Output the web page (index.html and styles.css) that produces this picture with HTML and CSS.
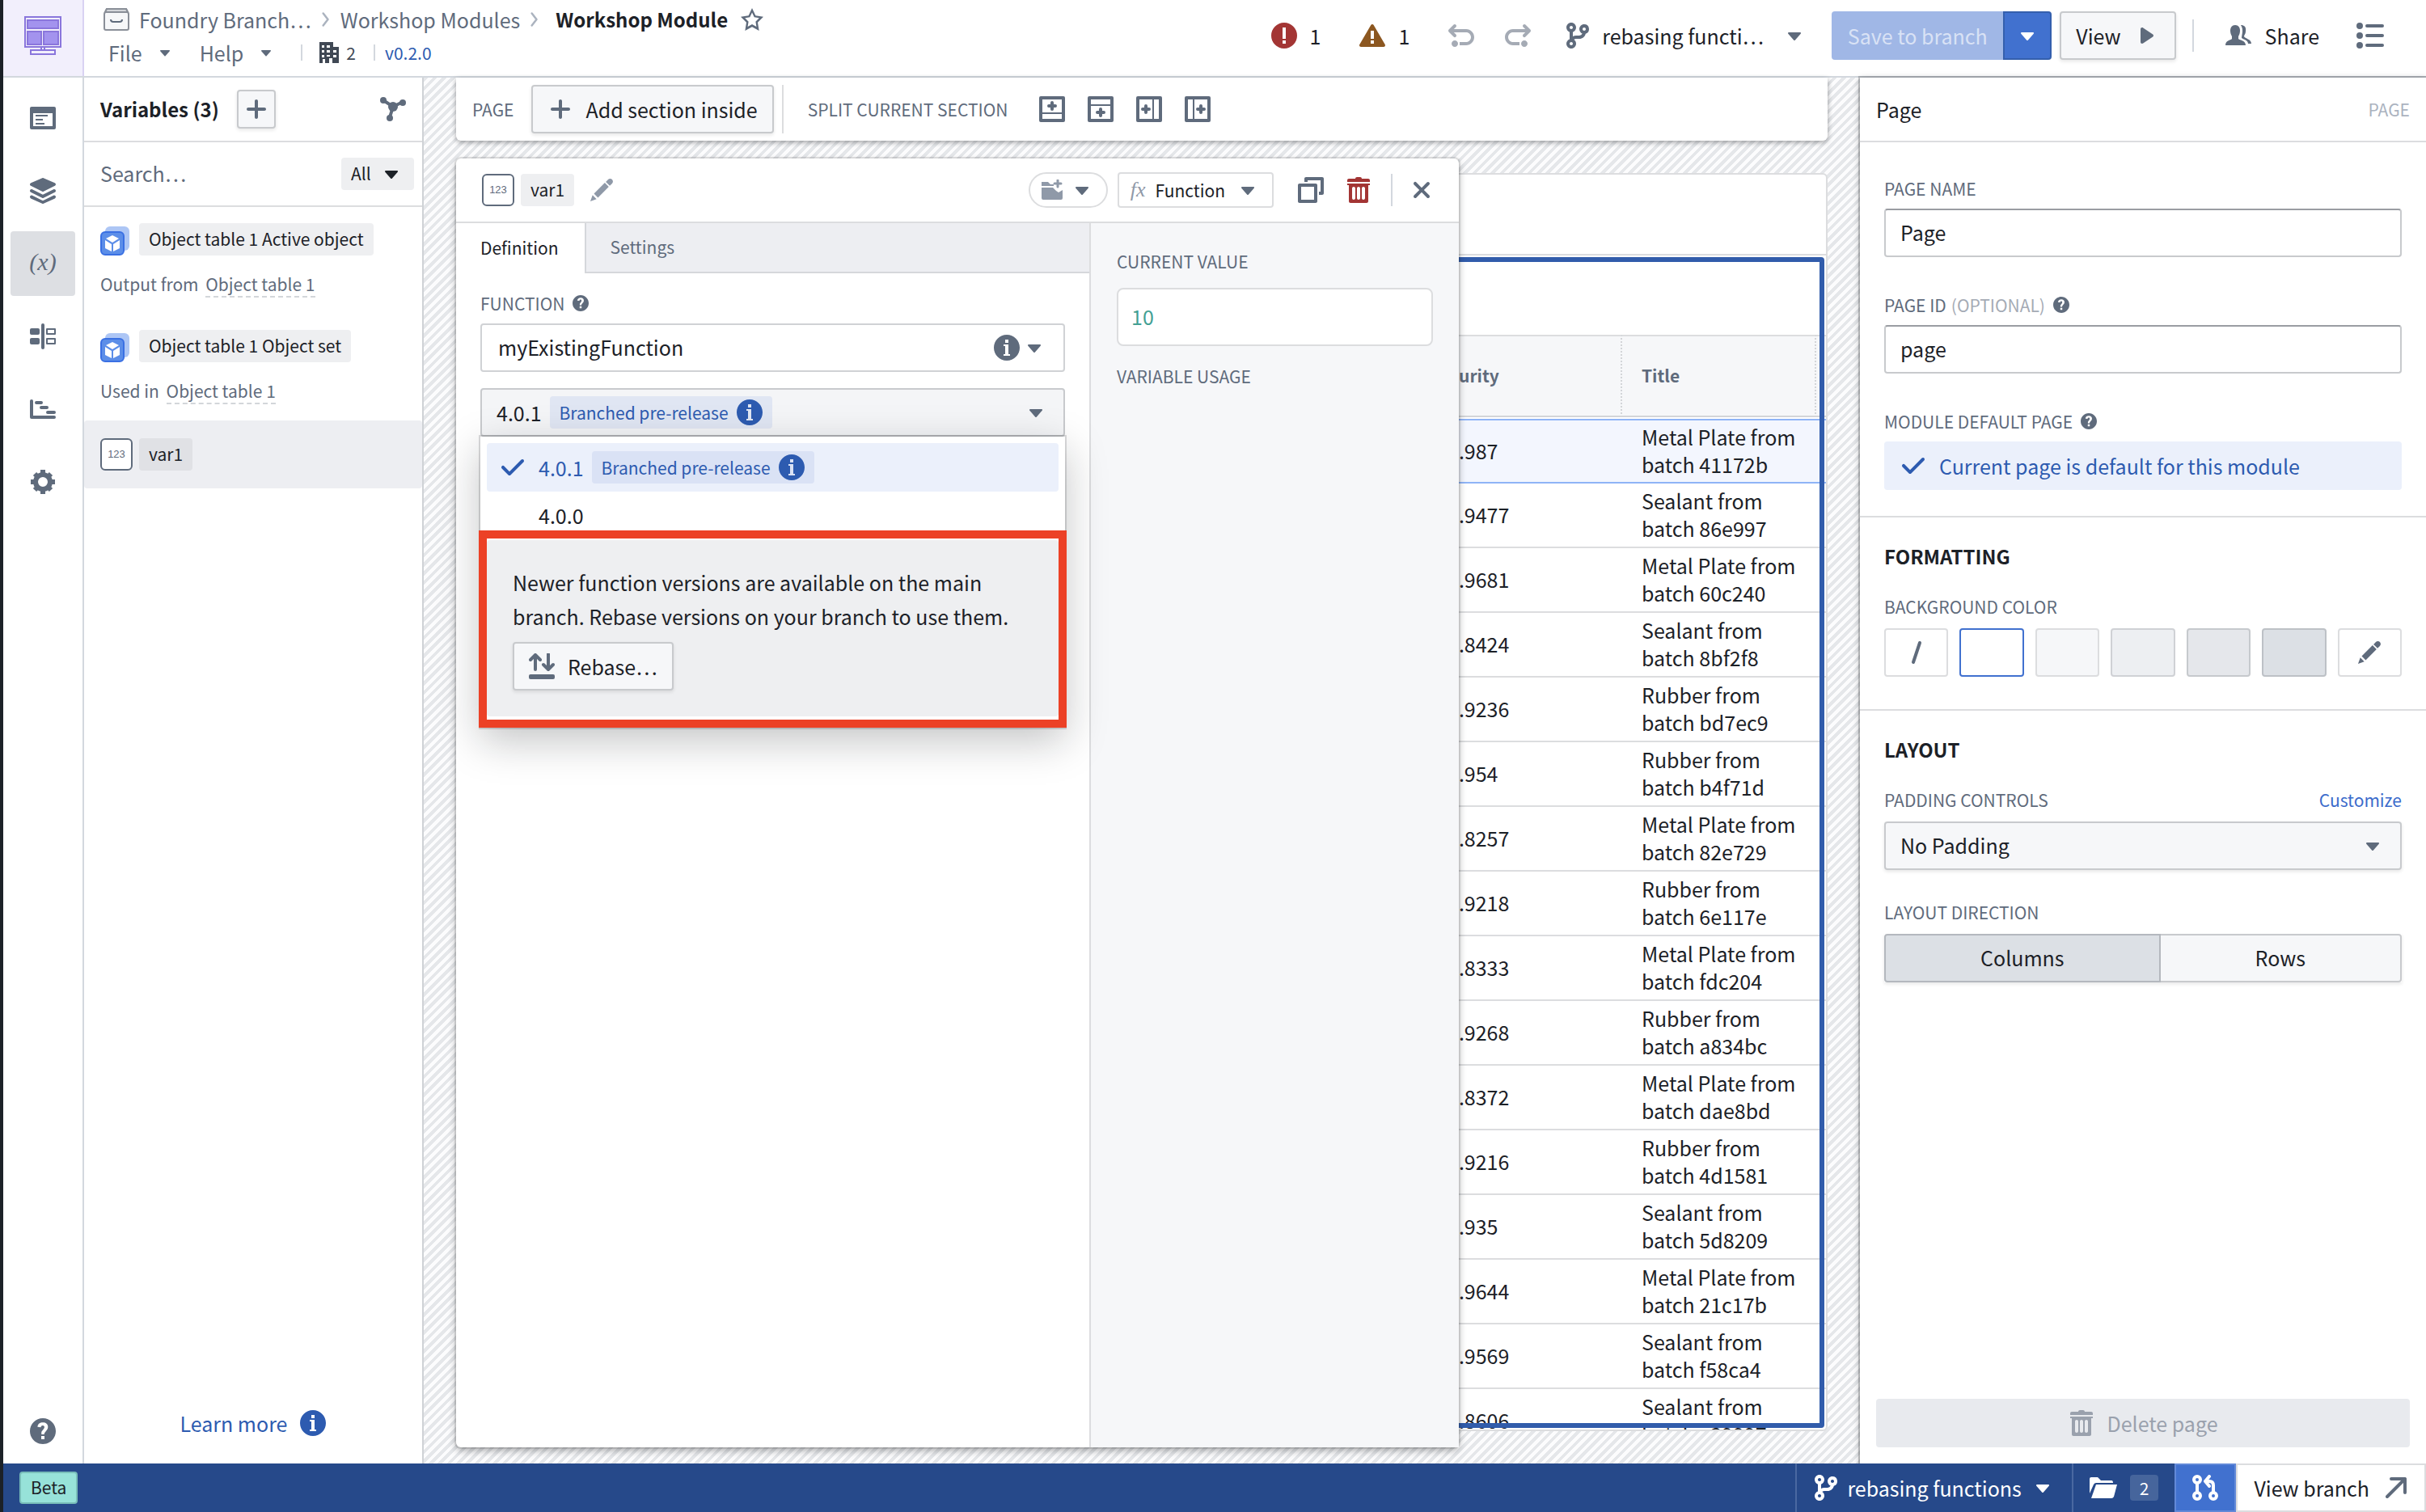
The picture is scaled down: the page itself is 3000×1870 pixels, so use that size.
FILE: index.html
```html
<!DOCTYPE html>
<html lang="en">
<head>
    <meta charset="UTF-8">
    <meta name="viewport" content="width=device-width, initial-scale=1.0">
    <title>Workshop Module</title>
    <link rel="stylesheet" href="styles.css">
</head>
<body>

<!-- Shared icons -->
<svg class="sprite" aria-hidden="true">
    <symbol id="caret" viewBox="0 0 16 16"><path d="M12 6.5c0-.28-.22-.5-.5-.5h-7a.495.495 0 00-.37.83l3.5 4c.09.1.22.17.37.17s.28-.07.37-.17l3.5-4c.08-.09.13-.2.13-.33z"/></symbol>
    <symbol id="plus" viewBox="0 0 16 16"><path d="M13 7H9V3c0-.55-.45-1-1-1s-1 .45-1 1v4H3c-.55 0-1 .45-1 1s.45 1 1 1h4v4c0 .55.45 1 1 1s1-.45 1-1V9h4c.55 0 1-.45 1-1s-.45-1-1-1z"/></symbol>
    <symbol id="tick" viewBox="0 0 16 16"><path d="M14 3c-.28 0-.53.11-.71.29L6 10.59l-3.29-3.3a1.003 1.003 0 00-1.42 1.42l4 4c.18.18.43.29.71.29s.53-.11.71-.29l8-8A1.003 1.003 0 0014 3z"/></symbol>
    <symbol id="chevron" viewBox="0 0 12 24"><path d="M2 3l7 9-7 9" fill="none" stroke="currentColor" stroke-width="3" stroke-linecap="round" stroke-linejoin="round"/></symbol>
    <symbol id="info" viewBox="0 0 16 16"><path d="M8 0C3.58 0 0 3.58 0 8s3.58 8 8 8 8-3.58 8-8-3.58-8-8-8zM7 3h2v2H7V3zm3 10H6v-1h1V7H6V6h3v6h1v1z"/></symbol>
    <symbol id="help" viewBox="0 0 16 16"><path d="M8 0C3.58 0 0 3.58 0 8s3.58 8 8 8 8-3.58 8-8-3.58-8-8-8zm1 13H7v-2h2v2zm1.93-6.48c-.14.32-.35.64-.62.97L9.25 8.83c-.12.15-.24.29-.28.42-.04.13-.09.3-.09.52V10H7.12V8.88s.05-.51.21-.71L8.4 6.73c.22-.26.35-.49.44-.68.09-.19.12-.38.12-.58 0-.3-.1-.55-.28-.75-.18-.19-.44-.28-.76-.28-.33 0-.59.1-.78.29-.19.19-.33.46-.4.81-.03.11-.1.15-.2.14l-1.7-.25c-.12-.01-.16-.08-.14-.19.12-.82.46-1.47 1.03-1.94.57-.48 1.32-.72 2.25-.72.47 0 .9.07 1.29.22s.72.34 1 .59c.28.25.49.55.65.89.15.35.22.72.22 1.12s-.07.75-.21 1.08z"/></symbol>
    <symbol id="branch" viewBox="0 0 16 16"><path d="M12 1c-1.66 0-3 1.34-3 3 0 1.25.76 2.32 1.85 2.77A2.02 2.02 0 019 8H7c-.73 0-1.41.21-2 .55V5.82C6.16 5.4 7 4.3 7 3c0-1.66-1.34-3-3-3S1 1.34 1 3c0 1.3.84 2.4 2 2.82v4.37c-1.16.4-2 1.51-2 2.81 0 1.66 1.34 3 3 3s3-1.34 3-3c0-1.04-.53-1.95-1.32-2.49.35-.31.81-.51 1.32-.51h2c1.92 0 3.52-1.35 3.91-3.15A2.996 2.996 0 0012 1zM4 2c.55 0 1 .45 1 1s-.45 1-1 1-1-.45-1-1 .45-1 1-1zm0 12c-.55 0-1-.45-1-1s.45-1 1-1 1 .45 1 1-.45 1-1 1zm8-9c-.55 0-1-.45-1-1s.45-1 1-1 1 .45 1 1-.45 1-1 1z"/></symbol>
    <symbol id="undo" viewBox="0 0 16 16"><path d="M4 11c-1.1 0-2 .9-2 2s.9 2 2 2 2-.9 2-2-.9-2-2-2zm7-7H3.41L4.7 2.71c.19-.18.3-.43.3-.71a1.003 1.003 0 00-1.71-.71l-3 3C.11 4.47 0 4.72 0 5c0 .28.11.53.29.71l3 3a1.003 1.003 0 001.42-1.42L3.41 6H11c1.66 0 3 1.34 3 3s-1.34 3-3 3H7v2h4c2.76 0 5-2.24 5-5s-2.24-5-5-5z"/></symbol>
    <symbol id="pencil" viewBox="0 0 16 16"><path d="M3.25 10.26l2.47 2.47 6.69-6.69-2.46-2.48-6.7 6.7zM.99 14.99l3.86-1.39-2.46-2.44L.99 14.99zm12.25-14c-.48 0-.92.2-1.24.51l-1.44 1.44 2.47 2.47 1.44-1.44c.32-.32.51-.75.51-1.24.01-.95-.77-1.74-1.74-1.74z"/></symbol>
    <symbol id="trash" viewBox="0 0 16 16"><path fill-rule="evenodd" d="M2 4.5h12V15c0 .55-.45 1-1 1H3c-.55 0-1-.45-1-1V4.500zM5 6c-.55 0-1 .45-1 1v6c0 .55.45 1 1 1s1-.45 1-1V7c0-.55-.45-1-1-1zm3 0c-.55 0-1 .45-1 1v6c0 .55.45 1 1 1s1-.45 1-1V7c0-.55-.45-1-1-1zm3 0c-.55 0-1 .45-1 1v6c0 .55.45 1 1 1s1-.45 1-1V7c0-.55-.45-1-1-1z"/><path d="M14 1h-4c0-.55-.45-1-1-1H7c-.55 0-1 .45-1 1H2c-.55 0-1 .45-1 1v1h14V2c0-.55-.45-1-1-1zM1 4h14v1H1z"/></symbol>
    <symbol id="objects" viewBox="0 0 36 36">
        <rect x="6" y="0" width="30" height="30" rx="6" fill="#adc6f5"/>
        <rect x="1" y="7" width="28" height="28" rx="5" fill="#5c8ee8" stroke="#3a70e3" stroke-width="2"/>
        <path d="M15 11l8 4-8 5-8-5z" fill="#fff"/>
        <path d="M6 17l8 5v9l-8-4zM24 17l-8 5v9l8-4z" fill="#fff"/>
    </symbol>
</svg>

<header class="topbar">
    <a class="logo" href="#" aria-label="Workshop">
        <svg width="48" height="48" viewBox="0 0 48 48">
            <path d="M2 1h44v37H2z" fill="#f2effc" stroke="#8a76dc" stroke-width="2"/>
            <path d="M5 5h38v10H5zM5 19h17v16H5zM25 19h18v16H25z" fill="#a393ee" stroke="#8a76dc" stroke-width="2"/>
            <path d="M9 42h30v5H9zM22 38v4M26 38v4" fill="#f2effc" stroke="#8a76dc" stroke-width="2"/>
        </svg>
    </a>
    <div class="title-block">
        <nav class="crumbs" aria-label="Breadcrumb">
            <svg width="32" height="28" viewBox="0 0 32 28"><path d="M4 1h24l3 6v18q0 2-2 2H3q-2 0-2-2V7z" fill="#f6f7f9" stroke="#8a8f98" stroke-width="2"/><path d="M4 1h24l2 4H2z" fill="#d3d6da" stroke="#8a8f98" stroke-width="2"/><path d="M9 14q0 3 3 3h8q3 0 3-3" fill="none" stroke="#5f6b7c" stroke-width="2"/></svg>
            <a href="#">Foundry Branch…</a>
            <svg class="faint" width="12" height="20"><use href="#chevron"/></svg>
            <a href="#">Workshop Modules</a>
            <svg class="faint" width="12" height="20"><use href="#chevron"/></svg>
            <h1>Workshop Module</h1>
            <button class="plain" aria-label="Favorite"><svg width="28" height="28" viewBox="0 0 16 16"><path d="M16 6.110l-5.530-.84L8 0 5.530 5.270 0 6.110l4 4.100L3.060 16 8 13.270 12.940 16 12 10.210l4-4.100zM4.910 13.200l.59-3.620L3 7.020l3.450-.53L8 3.200l1.550 3.290 3.450.53-2.500 2.560.59 3.620L8 11.490l-3.090 1.710z"/></svg></button>
        </nav>
        <div class="menus">
            <button class="plain menu-btn">File <svg width="24" height="24"><use href="#caret"/></svg></button>
            <button class="plain menu-btn">Help <svg width="24" height="24"><use href="#caret"/></svg></button>
            <span class="stat">
                <svg width="26" height="26" viewBox="0 0 26 26"><path fill-rule="evenodd" d="M1 0h17v6h7v20h-8v-6h-4v6H1zM4 4v3h3V4zm6 0v3h4V4zM4 10v3h3v-3zm6 0v3h4v-3zM4 16v3h3v-3zm6 0v2h4v-2zm8-6v3h4v-3zm0 6v3h4v-3zM5 21v5h3v-5z"/></svg>
                2
            </span>
            <a class="version" href="#">v0.2.0</a>
        </div>
    </div>

    <div class="actions">
        <span class="issue"><svg class="red" width="32" height="32" viewBox="0 0 16 16"><path d="M8 0a8 8 0 100 16A8 8 0 008 0zm1 13H7v-2h2v2zm0-3H7V3h2v7z"/></svg>1</span>
        <span class="issue"><svg class="brown" width="32" height="32" viewBox="0 0 16 16"><path d="M15.840 13.500l-7-12c-.17-.3-.48-.5-.85-.5s-.67.2-.85.5l-7 12c-.09.15-.15.31-.15.5 0 .55.45 1 1 1h14c.55 0 1-.45 1-1 0-.19-.06-.35-.15-.5zM9 13H7v-2h2v2zm0-3H7V5h2v5z"/></svg>1</span>
        <div class="history">
            <button class="plain" aria-label="Undo" disabled><svg width="32" height="32"><use href="#undo"/></svg></button>
            <button class="plain" aria-label="Redo" disabled><svg class="mirror" width="32" height="32"><use href="#undo"/></svg></button>
        </div>
        <button class="plain branch-btn">
            <svg width="32" height="32"><use href="#branch"/></svg>
            <span>rebasing functi…</span>
            <svg width="32" height="32"><use href="#caret"/></svg>
        </button>
        <div class="save-group">
            <button class="save" disabled>Save to branch</button>
            <button class="save-more" aria-label="More save options"><svg width="32" height="32"><use href="#caret"/></svg></button>
        </div>
        <button class="btn view-btn">View <svg width="32" height="32" viewBox="0 0 16 16"><path d="M12 8c0-.3-.1-.6-.4-.8l-6-4C5.500 3 5.200 3 5 3c-.6 0-1 .4-1 1v8c0 .6.4 1 1 1 .2 0 .5 0 .6-.2l6-4c.3-.2.4-.5.4-.8z"/></svg></button>
        <button class="plain share-btn">
            <svg width="34" height="32" viewBox="0 0 34 32"><path d="M13 3c4 0 6 3 6 7 0 3-1 5-2 7v3c2 2 9 2 9 8H1c0-6 6-6 8-8v-3c-1-2-2-4-2-7 0-4 2-7 6-7z"/><path d="M20 3c4 0 7 2 6 8 0 3-2 4-2 6 1 3 9 3 9 9h-4c0-4-5-5-8-7 0-4 3-10-1-16z"/></svg>
            Share
        </button>
        <button class="plain" aria-label="Outline"><svg width="34" height="32" viewBox="0 0 34 32"><path d="M0 4a4 4 0 018 0 4 4 0 01-8 0zm0 12a4 4 0 018 0 4 4 0 01-8 0zm0 12a4 4 0 018 0 4 4 0 01-8 0z"/><path d="M13 4h19M13 16h19M13 28h19" stroke="currentColor" stroke-width="4" stroke-linecap="round"/></svg></button>
    </div>
</header>

<div class="workspace">
    <nav class="rail" aria-label="Editor panels">
        <button aria-label="Overview"><svg width="32" height="32" viewBox="0 0 32 32"><path fill-rule="evenodd" d="M2 2h28q2 0 2 2v24q0 2-2 2H2q-2 0-2-2V4q0-2 2-2zm2 8v16h24V10z"/><path d="M7 13h15M7 18h9M7 23h11" stroke="currentColor" stroke-width="2"/></svg></button>
        <button aria-label="Layers"><svg width="32" height="32" viewBox="0 0 16 16"><path d="M.55 4.890l7 3.500c.14.070.29.110.45.110s.31-.04.45-.11l7-3.500a.998.998 0 00-.06-1.810L8.400.080a1.006 1.006 0 00-.79 0l-6.990 3a.992.992 0 00-.07 1.810zM15 10.800c-.16 0-.31.04-.45.11L8 14.180 1.450 10.900c-.14-.06-.29-.1-.45-.1-.55 0-1 .45-1 1 0 .39.23.73.55.89l7 3.200c.14.07.29.11.45.11s.31-.04.45-.11l7-3.200c.32-.16.55-.5.55-.89 0-.55-.45-1-1-1z"/><path d="M15 7c-.16 0-.31.04-.45.11L8 10.380 1.450 7.100C1.310 7.040 1.160 7 1 7c-.55 0-1 .45-1 1 0 .39.23.73.55.89l7 3.500c.14.07.29.11.45.11s.31-.04.45-.11l7-3.500c.32-.16.55-.5.55-.89 0-.55-.45-1-1-1z"/></svg></button>
        <button class="active" aria-label="Variables"><i>(x)</i></button>
        <button aria-label="Widgets"><svg width="32" height="32" viewBox="0 0 32 32"><rect x="14" y="0" width="4" height="32" rx="2"/><rect x="0" y="6" width="12" height="8" rx="2"/><rect x="0" y="18" width="12" height="8" rx="2"/><path d="M21 7h10v6H21zM21 19h10v6H21z" fill="none" stroke="currentColor" stroke-width="2" stroke-linejoin="round"/></svg></button>
        <button aria-label="Timeline"><svg width="32" height="32" viewBox="0 0 32 32"><path d="M2 6v20h28M8 8h6M14 14h7M22 20h8" fill="none" stroke="currentColor" stroke-width="4" stroke-linecap="round" stroke-linejoin="round"/></svg></button>
        <button aria-label="Settings"><svg width="32" height="32" viewBox="0 0 32 32"><circle cx="16" cy="16" r="9" fill="none" stroke="currentColor" stroke-width="6"/><path d="M16 1v6M16 25v6M1 16h6M25 16h6M6 6l4 4M22 22l4 4M26 6l-4 4M10 22l-4 4" stroke="currentColor" stroke-width="6"/></svg></button>
        <button class="rail-help" aria-label="Help"><svg width="32" height="32"><use href="#help"/></svg></button>
    </nav>

    <aside class="variables">
        <div class="panel-head">
            <h2>Variables (3)</h2>
            <button class="btn add-btn" aria-label="Add variable"><svg width="32" height="32"><use href="#plus"/></svg></button>
            <button class="plain graph-btn" aria-label="Dependency graph"><svg width="32" height="32" viewBox="0 0 32 32"><path d="M4 5l12 8L28 7M16 13l-4 13" fill="none" stroke="currentColor" stroke-width="4"/><circle cx="4" cy="5" r="4"/><circle cx="28" cy="8" r="4"/><circle cx="16" cy="13" r="6"/><circle cx="12" cy="27" r="4"/></svg></button>
        </div>
        <div class="search">
            <input type="text" placeholder="Search…" aria-label="Search variables">
            <div class="select-box small">
                <select aria-label="Variable type"><option>All</option></select>
                <svg width="32" height="32"><use href="#caret"/></svg>
            </div>
        </div>
        <ul class="var-list">
            <li>
                <div class="var-name"><svg width="36" height="36"><use href="#objects"/></svg><span class="tag">Object table 1 Active object</span></div>
                <p>Output from <a href="#">Object table 1</a></p>
            </li>
            <li>
                <div class="var-name"><svg width="36" height="36"><use href="#objects"/></svg><span class="tag">Object table 1 Object set</span></div>
                <p>Used in <a href="#">Object table 1</a></p>
            </li>
            <li class="selected">
                <div class="var-name"><span class="num-icon">123</span><span class="tag">var1</span></div>
            </li>
        </ul>
        <a class="learn" href="#">Learn more <svg width="32" height="32"><use href="#info"/></svg></a>
    </aside>

    <main class="canvas">
        <div class="section-bar">
            <span class="label">PAGE</span>
            <button class="btn section-btn"><svg width="32" height="32"><use href="#plus"/></svg> Add section inside</button>
            <span class="label split">SPLIT CURRENT SECTION</span>
            <button class="plain" aria-label="Add above"><svg width="32" height="32" viewBox="0 0 32 32"><path d="M2 2h28v28H2z" fill="none" stroke="currentColor" stroke-width="4" stroke-linejoin="round"/><path d="M4 21h24" stroke="currentColor" stroke-width="2"/><path d="M16 8v8M12 12h8" stroke="currentColor" stroke-width="4" stroke-linecap="round"/></svg></button>
            <button class="plain" aria-label="Add below"><svg width="32" height="32" viewBox="0 0 32 32"><path d="M2 2h28v28H2z" fill="none" stroke="currentColor" stroke-width="4" stroke-linejoin="round"/><path d="M4 11h24" stroke="currentColor" stroke-width="2"/><path d="M16 16v8M12 20h8" stroke="currentColor" stroke-width="4" stroke-linecap="round"/></svg></button>
            <button class="plain" aria-label="Add left"><svg width="32" height="32" viewBox="0 0 32 32"><path d="M2 2h28v28H2z" fill="none" stroke="currentColor" stroke-width="4" stroke-linejoin="round"/><path d="M21 4v24" stroke="currentColor" stroke-width="2"/><path d="M12 12v8M8 16h8" stroke="currentColor" stroke-width="4" stroke-linecap="round"/></svg></button>
            <button class="plain" aria-label="Add right"><svg width="32" height="32" viewBox="0 0 32 32"><path d="M2 2h28v28H2z" fill="none" stroke="currentColor" stroke-width="4" stroke-linejoin="round"/><path d="M11 4v24" stroke="currentColor" stroke-width="2"/><path d="M20 12v8M16 16h8" stroke="currentColor" stroke-width="4" stroke-linecap="round"/></svg></button>
        </div>

        <div class="page-card">
            <div class="page-header"></div>
            <div class="widget">
                <table>
                    <colgroup><col><col class="data-col"><col class="data-col"><col class="end-col"></colgroup>
                    <thead>
                        <tr><th></th><th>Purity</th><th>Title</th><th></th></tr>
                    </thead>
                    <tbody>
                        <tr class="picked"><td></td><td>0.987</td><td>Metal Plate from batch 41172b</td><td></td></tr>
                        <tr><td></td><td>0.9477</td><td>Sealant from batch 86e997</td><td></td></tr>
                        <tr><td></td><td>0.9681</td><td>Metal Plate from batch 60c240</td><td></td></tr>
                        <tr><td></td><td>0.8424</td><td>Sealant from batch 8bf2f8</td><td></td></tr>
                        <tr><td></td><td>0.9236</td><td>Rubber from batch bd7ec9</td><td></td></tr>
                        <tr><td></td><td>0.954</td><td>Rubber from batch b4f71d</td><td></td></tr>
                        <tr><td></td><td>0.8257</td><td>Metal Plate from batch 82e729</td><td></td></tr>
                        <tr><td></td><td>0.9218</td><td>Rubber from batch 6e117e</td><td></td></tr>
                        <tr><td></td><td>0.8333</td><td>Metal Plate from batch fdc204</td><td></td></tr>
                        <tr><td></td><td>0.9268</td><td>Rubber from batch a834bc</td><td></td></tr>
                        <tr><td></td><td>0.8372</td><td>Metal Plate from batch dae8bd</td><td></td></tr>
                        <tr><td></td><td>0.9216</td><td>Rubber from batch 4d1581</td><td></td></tr>
                        <tr><td></td><td>0.935</td><td>Sealant from batch 5d8209</td><td></td></tr>
                        <tr><td></td><td>0.9644</td><td>Metal Plate from batch 21c17b</td><td></td></tr>
                        <tr><td></td><td>0.9569</td><td>Sealant from batch f58ca4</td><td></td></tr>
                        <tr><td></td><td>0.8606</td><td>Sealant from batch e39997</td><td></td></tr>
                    </tbody>
                </table>
            </div>
        </div>

        <!-- Variable editor, floats over the page -->
        <section class="editor">
            <header class="editor-head">
                <span class="num-icon">123</span>
                <span class="tag">var1</span>
                <button class="plain pale" aria-label="Rename"><svg width="32" height="32"><use href="#pencil"/></svg></button>
                <div class="editor-tools">
                    <button class="outline pill" aria-label="Add to folder">
                        <svg class="pale" width="26" height="26" viewBox="0 0 26 26"><path d="M0 3h8l3 3h4v2H0zM0 10h14l4 4 3 2 5-3v10q0 2-2 2H2q-2 0-2-2z"/><path d="M20 1v8M16 5h8" stroke="currentColor" stroke-width="3" stroke-linecap="round"/></svg>
                        <svg width="32" height="32"><use href="#caret"/></svg>
                    </button>
                    <button class="outline"><i>fx</i> Function <svg width="32" height="32"><use href="#caret"/></svg></button>
                    <button class="plain copy" aria-label="Duplicate"><svg width="32" height="32" viewBox="0 0 16 16"><path d="M15 0H5c-.55 0-1 .45-1 1v2h2V2h8v7h-1v2h2c.55 0 1-.45 1-1V1c0-.55-.45-1-1-1zm-4 4H1c-.55 0-1 .45-1 1v10c0 .55.45 1 1 1h10c.55 0 1-.45 1-1V5c0-.55-.45-1-1-1zm-1 10H2V6h8v8z"/></svg></button>
                    <button class="plain" aria-label="Delete"><svg class="red" width="32" height="32"><use href="#trash"/></svg></button>
                    <button class="plain close" aria-label="Close"><svg width="32" height="32" viewBox="0 0 16 16"><path d="M9.410 8l3.290-3.290c.19-.18.3-.43.3-.71a1.003 1.003 0 00-1.710-.71L8 6.590l-3.290-3.300a1.003 1.003 0 00-1.420 1.420L6.590 8 3.300 11.290c-.19.18-.3.43-.3.71a1.003 1.003 0 001.710.71L8 9.410l3.290 3.290c.18.19.43.3.71.3a1.003 1.003 0 00.71-1.710L9.410 8z"/></svg></button>
                </div>
            </header>
            <div class="editor-body">
                <div class="definition">
                    <div class="tabs" role="tablist">
                        <button role="tab" aria-selected="true">Definition</button>
                        <button role="tab" aria-selected="false">Settings</button>
                    </div>
                    <div class="fields">
                        <label class="label" for="function">FUNCTION <svg width="20" height="20"><use href="#help"/></svg></label>
                        <div class="select-box function-box">
                            <select id="function"><option>myExistingFunction</option></select>
                            <span class="select-icons"><svg width="32" height="32"><use href="#info"/></svg><svg width="32" height="32"><use href="#caret"/></svg></span>
                        </div>
                        <div class="version-picker">
                            <button class="version-btn" aria-haspopup="listbox" aria-expanded="true">
                                4.0.1
                                <span class="tag blue-tag">Branched pre-release <svg width="32" height="32"><use href="#info"/></svg></span>
                                <svg class="end" width="32" height="32"><use href="#caret"/></svg>
                            </button>
                            <div class="version-menu">
                                <ul role="listbox" aria-label="Version">
                                    <li role="option" aria-selected="true"><svg width="32" height="32"><use href="#tick"/></svg>4.0.1 <span class="tag blue-tag">Branched pre-release <svg width="32" height="32"><use href="#info"/></svg></span></li>
                                    <li role="option" aria-selected="false">4.0.0</li>
                                </ul>
                                <div class="rebase">
                                    <div class="rebase-body">
                                        <p>Newer function versions are available on the main branch. Rebase versions on your branch to use them.</p>
                                        <button class="btn"><svg width="32" height="32" viewBox="0 0 32 32"><path d="M8 20V3M2 8l6-6 6 6M24 1v18M18 14l6 6 6-6" fill="none" stroke="currentColor" stroke-width="4" stroke-linecap="round" stroke-linejoin="round"/><rect x="0" y="26" width="32" height="6" rx="2"/></svg> Rebase…</button>
                                    </div>
                                </div>
                            </div>
                        </div>
                    </div>
                </div>
                <div class="value-side">
                    <h3 class="label">CURRENT VALUE</h3>
                    <output>10</output>
                    <h3 class="label">VARIABLE USAGE</h3>
                </div>
            </div>
        </section>
    </main>

    <aside class="settings">
        <div class="panel-head">
            <h2 class="regular">Page</h2>
            <span class="label kind">PAGE</span>
        </div>
        <section>
            <div class="field">
                <label class="label" for="page-name">PAGE NAME</label>
                <input class="text-input" id="page-name" type="text" value="Page">
            </div>
            <div class="field">
                <label class="label" for="page-id">PAGE ID <span>(OPTIONAL)</span> <svg width="20" height="20"><use href="#help"/></svg></label>
                <input class="text-input" id="page-id" type="text" value="page">
            </div>
            <div class="field">
                <h3 class="label">MODULE DEFAULT PAGE <svg width="20" height="20"><use href="#help"/></svg></h3>
                <div class="callout"><svg width="32" height="32"><use href="#tick"/></svg> Current page is default for this module</div>
            </div>
        </section>
        <section class="options">
            <h2>FORMATTING</h2>
            <h3 class="label">BACKGROUND COLOR</h3>
            <div class="swatches">
                <button aria-label="No color"><svg width="32" height="32" viewBox="0 0 16 16"><path d="M10 2L6 14" stroke="currentColor" stroke-width="2" stroke-linecap="round"/></svg></button>
                <button class="white" aria-label="White"></button>
                <button class="gray-1" aria-label="Light gray 1"></button>
                <button class="gray-2" aria-label="Light gray 2"></button>
                <button class="gray-3" aria-label="Light gray 3"></button>
                <button class="gray-4" aria-label="Light gray 4"></button>
                <button aria-label="Custom color"><svg width="32" height="32"><use href="#pencil"/></svg></button>
            </div>
        </section>
        <section class="options">
            <h2>LAYOUT</h2>
            <div class="label-row">
                <label class="label" for="padding">PADDING CONTROLS</label>
                <a href="#">Customize</a>
            </div>
            <div class="select-box padding-box">
                <select id="padding"><option>No Padding</option></select>
                <svg width="32" height="32"><use href="#caret"/></svg>
            </div>
            <h3 class="label">LAYOUT DIRECTION</h3>
            <div class="direction">
                <button class="on" aria-pressed="true">Columns</button>
                <button aria-pressed="false">Rows</button>
            </div>
        </section>
        <button class="delete" disabled><svg width="32" height="32"><use href="#trash"/></svg> Delete page</button>
    </aside>
</div>

<footer class="statusbar">
    <span class="beta">Beta</span>
    <button class="status-branch"><svg width="32" height="32"><use href="#branch"/></svg> rebasing functions <svg width="32" height="32"><use href="#caret"/></svg></button>
    <button class="status-files" aria-label="Changed files"><svg width="34" height="26" viewBox="0 0 34 26"><path d="M0 20V2q0-2 2-2h8l4 4h13q2 0 2 3H8q-2 0-3 2z"/><path d="M8 9h26l-4 15q-1 2-3 2H2z"/></svg><span>2</span></button>
    <button class="status-pull" aria-label="Proposal"><svg width="32" height="32" viewBox="0 0 32 32"><g fill="none" stroke="currentColor" stroke-width="4"><circle cx="6" cy="6" r="4"/><circle cx="6" cy="26" r="4"/><circle cx="26" cy="26" r="4"/><path d="M6 10v12M26 22v-9q0-5-5-5h-5M21 2l-5 6 5 6" stroke-linejoin="round" stroke-linecap="round"/></g></svg></button>
    <a class="view-branch" href="#">View branch <svg width="26" height="26" viewBox="0 0 26 26"><path d="M2 24L24 2M7 2h17v17" fill="none" stroke="currentColor" stroke-width="4" stroke-linecap="round" stroke-linejoin="round"/></svg></a>
</footer>

</body>
</html>
```

FILE: styles.css
```css
* {
    box-sizing: border-box;
}

body {
    margin: 0;
    height: 100vh;
    display: flex;
    flex-direction: column;
    border-left: 4px solid #1c2127;
    background: white;
    color: #1c2127;
    font-family: "Noto Sans CJK JP", "Noto Sans", sans-serif;
    font-size: 25px;
    line-height: 36px;
}

button, input, select {
    font: inherit;
    color: inherit;
    margin: 0;
}

button {
    cursor: pointer;
}

h1, h2, h3, p, ul {
    margin: 0;
    padding: 0;
}

h1, h2 {
    font-size: 24px;
    font-weight: 600;
}

ul {
    list-style: none;
}

a {
    color: inherit;
    text-decoration: none;
}

svg {
    flex: none;
    display: block;
    color: #5f6b7c;
    fill: currentColor;
}

.sprite {
    position: absolute;
    width: 0;
    height: 0;
}

.red {
    color: #a33534;
}

.brown {
    color: #8c5720;
}

.pale, .pale svg {
    color: #8f99a8;
}

.faint {
    color: #abb3bf;
}

.mirror {
    transform: scaleX(-1);
}

/* Buttons */
.plain {
    display: flex;
    align-items: center;
    padding: 0;
    border: none;
    background: none;
}

.btn {
    display: flex;
    align-items: center;
    height: 60px;
    padding: 0 18px;
    gap: 16px;
    border: 2px solid #c8cacd;
    border-radius: 4px;
    background: #f6f7f9;
    box-shadow: 0 2px 4px rgba(17, 20, 24, 0.1);
}

.tag {
    display: flex;
    align-items: center;
    height: 40px;
    padding: 0 12px 2px;
    border-radius: 4px;
    background: #eeeff1;
    font-size: 21px;
    white-space: nowrap;
}

.label {
    display: flex;
    align-items: center;
    gap: 10px;
    color: #5f6b7c;
    font-size: 21px;
    font-weight: 400;
    line-height: 30px;
    white-space: nowrap;
}

.num-icon {
    display: flex;
    align-items: center;
    justify-content: center;
    width: 40px;
    height: 40px;
    border: 2px solid #5f6b7c;
    border-radius: 6px;
    background: white;
    color: #5f6b7c;
    font-family: "Liberation Sans", sans-serif;
    font-size: 13px;
}

/* Top bar */
.topbar {
    display: flex;
    height: 96px;
    border-bottom: 2px solid #d3d8de;
    flex: none;
}

.logo {
    display: flex;
    align-items: center;
    justify-content: center;
    width: 100px;
    padding-bottom: 6px;
    border-right: 2px solid #d9d2f3;
    background: #f2effc;
}

.title-block {
    padding: 6px 24px;
}

.crumbs {
    display: flex;
    align-items: center;
    gap: 12px;
    color: #5f6b7c;
    white-space: nowrap;
}

.crumbs h1 {
    margin-left: 8px;
    margin-right: 4px;
    color: #1c2127;
}

.menus {
    display: flex;
    align-items: center;
    margin-top: 5px;
    padding-left: 6px;
}

.menu-btn {
    gap: 16px;
    margin-right: 31px;
    color: #5f6b7c;
}

.stat, .version {
    display: flex;
    align-items: center;
    height: 20px;
    font-size: 21px;
    padding: 0 22px 0 20px;
    border-left: 2px solid #d3d8de;
    gap: 8px;
    color: #404854;
}

.stat svg {
    color: #404854;
}

.version {
    padding-left: 12px;
    color: #2d5bb0;
}

.actions {
    display: flex;
    align-items: center;
    margin-left: auto;
    padding-right: 52px;
    margin-bottom: 6px;
    white-space: nowrap;
}

.issue {
    display: flex;
    gap: 16px;
    align-items: center;
    margin-right: 48px;
}

.history {
    display: flex;
    gap: 38px;
}

.history svg {
    color: #a5abb5;
}

.branch-btn {
    gap: 14px;
    margin: 0 30px 0 42px;
}

.branch-btn span {
    width: 208px;
    text-align: left;
}

.save-group {
    display: flex;
}

.save, .save-more {
    height: 60px;
    border: none;
}

.save {
    width: 212px;
    padding: 0;
    border-radius: 4px 0 0 4px;
    background: #a0b7e6;
    color: #d9e2f5;
}

.save-more {
    display: flex;
    align-items: center;
    width: 60px;
    padding: 0 12px;
    border: 2px solid #345fad;
    border-radius: 0 4px 4px 0;
    background: #4171cf;
}

.save-more svg {
    color: white;
}

.view-btn {
    margin-left: 10px;
}

.share-btn {
    height: 40px;
    gap: 16px;
    margin: 0 46px 0 20px;
    padding-left: 38px;
    border-left: 2px solid #d3d8de;
}

/* Body columns */
.workspace {
    display: flex;
    flex: 1;
    min-height: 0;
}

.rail {
    display: flex;
    flex-direction: column;
    align-items: center;
    gap: 10px;
    width: 100px;
    padding: 10px 0 0;
    border-right: 2px solid #d3d8de;
}

.rail button {
    display: flex;
    align-items: center;
    justify-content: center;
    width: 80px;
    height: 80px;
    border: none;
    border-radius: 4px;
    background: none;
}

.rail .active {
    background: #dddfe3;
}

.rail i {
    padding-bottom: 4px;
    color: #5f6b7c;
    font-family: "Liberation Serif", serif;
    font-size: 30px;
}

.rail .rail-help {
    margin-top: auto;
}

.variables {
    display: flex;
    flex-direction: column;
    width: 420px;
    border-right: 2px solid #cfd2d6;
}

.panel-head {
    display: flex;
    align-items: center;
    height: 80px;
    padding: 0 20px;
    border-bottom: 2px solid #dcdddf;
    flex: none;
}

.add-btn {
    width: 48px;
    height: 48px;
    margin-left: 22px;
    padding: 6px;
}

.graph-btn {
    margin-left: auto;
}

.search {
    display: flex;
    align-items: center;
    height: 80px;
    padding: 0 10px 0 20px;
    border-bottom: 2px solid #dcdddf;
}

.search input {
    flex: 1;
    min-width: 0;
    padding: 0 0 2px;
    border: none;
    outline: none;
}

.search input::placeholder {
    color: #5f6b7c;
}

/* Selects with a caret drawn over the right end */
.select-box {
    display: grid;
    align-items: center;
}

.select-box > * {
    grid-area: 1 / 1;
}

.select-box > svg, .select-icons {
    justify-self: end;
    margin-right: 20px;
    pointer-events: none;
}

.select-box select {
    width: 100%;
    height: 60px;
    padding: 0 20px 2px;
    appearance: none;
    border: 2px solid #d0d2d5;
    border-radius: 4px;
    background: white;
}

.select-box.small {
    width: 90px;
}

.small select {
    height: 40px;
    padding: 0 12px 2px;
    border: none;
    background: #eeeff1;
    font-size: 21px;
}

.small > svg {
    margin-right: 12px;
    color: #1c2127;
}

.select-icons {
    display: flex;
    gap: 2px;
    margin-right: 22px;
}

.var-list li {
    padding: 20px 20px 16px;
}

.var-list .selected {
    padding: 22px 20px;
    border-radius: 4px;
    background: #edeef2;
}

.selected .tag {
    background: #e0e1e5;
}

.var-name {
    display: flex;
    align-items: flex-end;
}

.var-name .tag {
    margin-left: 12px;
}

.var-name .num-icon {
    margin-right: -4px;
}

.var-list p {
    margin-top: 15px;
    margin-bottom: 1px;
    color: #5f6b7c;
    font-size: 21px;
    line-height: 40px;
}

.var-list p a {
    margin-left: 4px;
    border-bottom: 2px dashed #d3d6da;
}

.learn {
    display: flex;
    align-items: center;
    justify-content: center;
    gap: 16px;
    margin: auto 0 32px;
    color: #2d5bb0;
}

.learn svg {
    color: #2d5bb0;
}

/* Canvas */
.canvas {
    position: relative;
    display: flex;
    flex-direction: column;
    flex: 1;
    min-width: 0;
    padding: 0 40px;
    background: repeating-linear-gradient(135deg, #e5e7ea 0 4px, #fcfcfd 4px 8px);
}

.section-bar {
    display: flex;
    align-items: center;
    height: 78px;
    padding: 0 20px;
    border-radius: 0 0 6px 6px;
    background: white;
    box-shadow: 0 2px 6px rgba(17, 20, 24, 0.4);
    flex: none;
}

.section-bar .plain {
    margin-left: 28px;
}

.section-btn {
    margin: 0 10px 0 21px;
}

.split {
    height: 60px;
    padding-left: 30px;
    padding-right: 11px;
    border-left: 2px solid #dcdddf;
}

.page-card {
    display: flex;
    flex-direction: column;
    flex: 1;
    min-height: 0;
    margin: 40px 0;
    border: 2px solid #dcdddf;
    border-radius: 6px;
    background: white;
}

.page-header {
    height: 100px;
    border-bottom: 2px solid #dcdddf;
    flex: none;
}

.widget {
    position: relative;
    flex: 1;
    min-height: 0;
    padding-top: 98px;
    overflow: hidden;
}

.widget::after {
    content: "";
    position: absolute;
    inset: 2px;
    border: 6px solid #315cab;
    border-radius: 4px;
}

table {
    width: 100%;
    table-layout: fixed;
    border-spacing: 0;
}

.data-col {
    width: 240px;
}

.end-col {
    width: 12px;
}

th {
    height: 102px;
    padding: 0 24px 2px;
    border-top: 2px solid #dcdddf;
    border-bottom: 2px solid #d3d5d8;
    background: #f6f7f9;
    color: #5f6b7c;
    font-size: 21px;
    font-weight: 600;
    text-align: left;
}

th:nth-child(2), th:nth-child(3) {
    border-right: 2px dotted #d3d5d8;
}

tbody::before {
    content: "";
    display: block;
    height: 2px;
}

td {
    height: 80px;
    padding: 0 24px 2px;
    border-bottom: 2px solid #dcdddf;
    line-height: 34px;
}

th:last-child, td:last-child {
    padding: 0;
}

.picked td {
    border-top: 2px solid #8fb4f7;
    border-bottom-color: #8fb4f7;
    background: #f3f6fe;
}

/* Variable editor */
.editor {
    position: absolute;
    top: 100px;
    bottom: 20px;
    left: 40px;
    display: flex;
    flex-direction: column;
    width: 1240px;
    border-radius: 6px;
    background: white;
    box-shadow: 0 0 0 2px rgba(17, 20, 24, 0.1), 0 4px 10px rgba(17, 20, 24, 0.35);
}

.editor-head {
    display: flex;
    align-items: center;
    gap: 8px;
    height: 80px;
    padding: 0 30px 0 32px;
    border-bottom: 2px solid #dcdddf;
}

.editor-head > .plain {
    margin-left: 10px;
}

.editor-tools {
    display: flex;
    align-items: center;
    gap: 12px;
    margin-left: auto;
}

.outline {
    display: flex;
    align-items: center;
    gap: 12px;
    height: 44px;
    padding: 0 14px;
    border: 2px solid #dcdddf;
    border-radius: 4px;
    background: white;
    font-size: 21px;
}

.outline i {
    color: #8f99a8;
    font-family: "Liberation Serif", serif;
    font-size: 26px;
}

.pill {
    gap: 8px;
    border-radius: 22px;
}

.copy {
    margin: 0 15px 0 18px;
}

.close {
    height: 40px;
    padding-left: 20px;
    margin-left: 12px;
    border-left: 2px solid #d3d8de;
}

.editor-body {
    display: flex;
    flex: 1;
    min-height: 0;
}

.definition {
    flex: 1;
    border-right: 2px solid #dcdddf;
}

.tabs {
    display: flex;
    height: 62px;
    border-bottom: 2px solid #d5d7db;
    background: #edeef2;
}

.tabs button {
    padding: 0 32px 2px 30px;
    border: none;
    background: none;
    color: #5f6b7c;
    font-size: 21px;
}

.tabs button[aria-selected="true"] {
    height: 62px;
    border-right: 2px solid #d5d7db;
    background: white;
    color: #1c2127;
}

.fields {
    padding: 22px 30px;
}

.fields .label {
    margin-bottom: 10px;
}

.version-picker {
    position: relative;
    margin-top: 20px;
}

.version-btn {
    display: flex;
    align-items: center;
    gap: 10px;
    width: 100%;
    height: 60px;
    padding: 0 18px;
    border: 2px solid #c8cacd;
    border-radius: 4px;
    background: #f4f5f7;
}

.end {
    margin-left: auto;
}

.blue-tag {
    gap: 10px;
    padding-bottom: 0;
    background: #e0e6f3;
    color: #2d5bb0;
}

.blue-tag svg {
    color: #2d5bb0;
}

.version-menu {
    position: absolute;
    top: 60px;
    left: 0;
    right: 0;
    background: white;
    box-shadow: 0 0 0 2px rgba(17, 20, 24, 0.15), 0 16px 48px rgba(17, 20, 24, 0.25);
}

.version-menu ul {
    padding: 8px 8px 0;
}

.version-menu li {
    display: flex;
    align-items: center;
    gap: 10px;
    height: 60px;
    padding: 0 16px;
    border-radius: 4px;
}

.version-menu li[aria-selected="true"] {
    background: #ebf0fb;
    color: #2d5bb0;
}

.version-menu li > svg {
    margin-right: 6px;
    color: #2d5bb0;
}

.version-menu li[aria-selected="false"] {
    height: 48px;
    padding: 11px 0 0 64px;
    align-items: flex-start;
}

.version-menu li .blue-tag {
    background: #dae2f5;
}

.rebase {
    margin: 0 -2px;
    padding: 2px 0 4px;
    border: 10px solid #ec4126;
}

.rebase-body {
    padding: 31px 32px 32px;
    border-radius: 4px;
    background: #eeeff1;
}

.rebase p {
    margin-bottom: 11px;
    line-height: 42px;
}

.value-side {
    width: 455px;
    padding: 32px;
    background: #f6f7f9;
}

.value-side output {
    display: flex;
    align-items: center;
    height: 72px;
    margin: 18px 0 22px;
    padding: 0 16px 2px;
    border: 2px solid #dcdddf;
    border-radius: 8px;
    background: white;
    color: #43a094;
}

/* Page settings */
.settings {
    position: relative;
    display: flex;
    flex-direction: column;
    width: 700px;
    background: white;
    box-shadow: 0 0 0 2px rgba(17, 20, 24, 0.2), 0 2px 8px rgba(17, 20, 24, 0.35);
}

.regular {
    font-size: 25px;
    font-weight: 400;
}

.kind {
    margin-left: auto;
    color: #abb3bf;
}

.label span {
    margin-left: -4px;
    color: #a5abb5;
}

.settings section {
    padding: 42px 30px 32px;
    border-bottom: 2px solid #dcdddf;
}

.field + .field {
    margin-top: 44px;
}

.field .label {
    margin-bottom: 10px;
}

.text-input {
    display: block;
    width: 100%;
    height: 60px;
    padding: 0 18px 2px;
    border: 2px solid #c8cacd;
    border-top-color: #9a9da2;
    border-radius: 4px;
}

.callout {
    display: flex;
    align-items: center;
    gap: 16px;
    height: 60px;
    padding: 0 20px;
    border-radius: 4px;
    background: #ebf0fb;
    color: #2d5bb0;
}

.callout svg {
    color: #2d5bb0;
}

.settings .options {
    padding: 32px 30px 40px;
}

.settings .options:last-of-type {
    border-bottom: none;
}

.options h2 {
    margin-bottom: 31px;
    line-height: 32px;
}

.options h3 {
    margin-bottom: 12px;
}

.swatches {
    display: grid;
    grid-template-columns: repeat(7, 1fr);
    gap: 14px;
}

.swatches button {
    display: flex;
    align-items: center;
    justify-content: center;
    height: 60px;
    border: 2px solid #dcdddf;
    border-radius: 4px;
    background: white;
}

.swatches .white {
    border-color: #4171cf;
}

.swatches .gray-1 {
    background: #f6f7f9;
}

.swatches .gray-2 {
    border-color: #cfd1d5;
    background: #edeff2;
}

.swatches .gray-3 {
    border-color: #c6c9cd;
    background: #e5e7eb;
}

.swatches .gray-4 {
    border-color: #bdc1c6;
    background: #dce0e5;
}

.label-row {
    display: flex;
    justify-content: space-between;
    margin-bottom: 12px;
    font-size: 21px;
    line-height: 30px;
}

.label-row a {
    color: #3b6bcb;
}

.padding-box {
    margin-bottom: 37px;
}

.padding-box select {
    padding: 0 18px 2px;
    border-color: #c8cacd;
    background: #f6f7f9;
    box-shadow: 0 2px 4px rgba(17, 20, 24, 0.1);
}

.direction {
    display: flex;
    box-shadow: 0 2px 4px rgba(17, 20, 24, 0.1);
}

.direction button {
    flex: 1 1 auto;
    height: 60px;
    padding-bottom: 3px;
    border: 2px solid #c8cacd;
    border-radius: 0 4px 4px 0;
    border-left: none;
    background: #f6f7f9;
}

.direction .on {
    border: 2px solid #b4b8be;
    border-radius: 4px 0 0 4px;
    background: #dce0e5;
}

.delete {
    display: flex;
    align-items: center;
    justify-content: center;
    gap: 16px;
    height: 60px;
    margin: auto 20px 20px;
    border: none;
    border-radius: 4px;
    background: #e8eaee;
    color: #9aa1ad;
}

.delete svg {
    color: #9aa1ad;
}

/* Status bar */
.statusbar {
    position: relative;
    display: flex;
    align-items: center;
    height: 60px;
    padding-left: 20px;
    background: #26498a;
    color: white;
    flex: none;
}

.beta {
    display: flex;
    align-items: center;
    height: 40px;
    margin-right: auto;
    padding: 0 12px 2px;
    border: 2px solid #78bdb9;
    border-radius: 4px;
    background: #97e2d9;
    color: #1c2127;
    font-size: 21px;
}

.statusbar button {
    display: flex;
    align-items: center;
    height: 60px;
    border: none;
    border-left: 2px solid #4a68a1;
    background: none;
}

.statusbar svg {
    color: white;
}

.status-branch {
    gap: 10px;
    padding: 0 20px;
}

.status-files {
    gap: 16px;
    padding: 0 20px;
}

.status-files span {
    padding: 0 12px;
    border-radius: 4px;
    background: #46659c;
    font-size: 21px;
    line-height: 32px;
}

.statusbar .status-pull {
    width: 76px;
    padding: 0 20px;
    border: 2px solid #6289d8;
    background: #4171cf;
}

.view-branch {
    display: flex;
    align-items: center;
    gap: 20px;
    height: 60px;
    padding: 0 22px 0 20px;
    border: 2px solid #dcdddf;
    background: white;
    color: #1c2127;
}

.statusbar .view-branch svg {
    color: #5f6b7c;
}
```
